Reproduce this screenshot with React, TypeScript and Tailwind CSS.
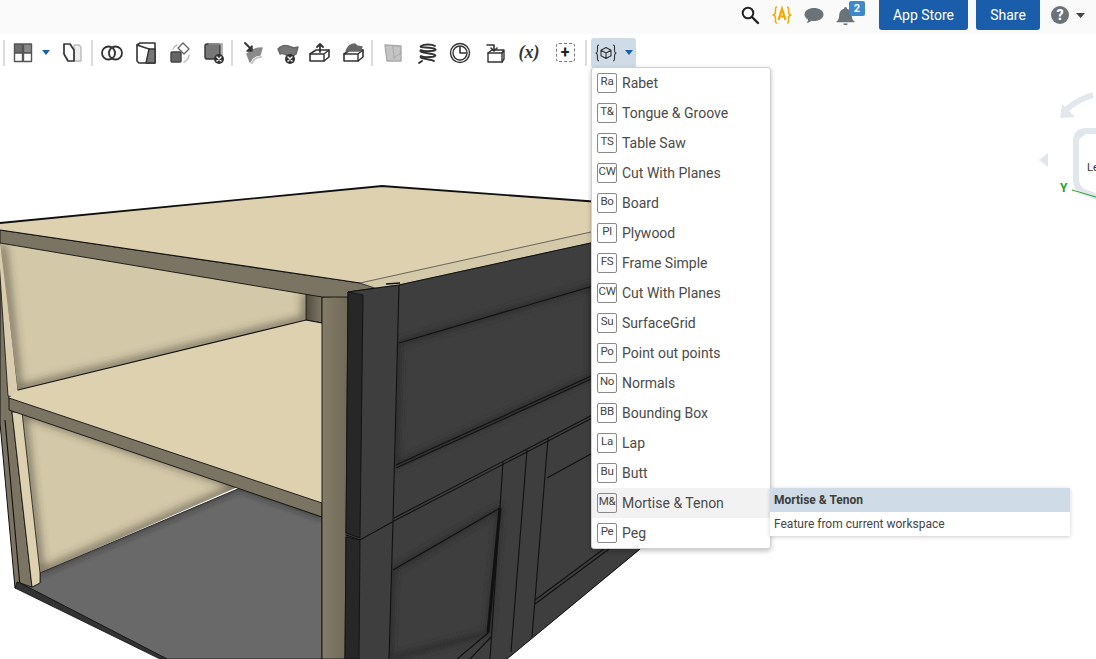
import React from "react";

const items: [string, string][] = [
  ["Ra", "Rabet"], ["T&", "Tongue & Groove"], ["TS", "Table Saw"], ["CW", "Cut With Planes"],
  ["Bo", "Board"], ["Pl", "Plywood"], ["FS", "Frame Simple"], ["CW", "Cut With Planes"],
  ["Su", "SurfaceGrid"], ["Po", "Point out points"], ["No", "Normals"], ["BB", "Bounding Box"],
  ["La", "Lap"], ["Bu", "Butt"], ["M&", "Mortise & Tenon"], ["Pe", "Peg"],
];

const I = ({ children }: { children: React.ReactNode }) => (
  <svg width="24" height="24" viewBox="0 0 24 24" fill="none" stroke="#333" strokeWidth="1.4" strokeLinejoin="round" strokeLinecap="round">{children}</svg>
);
const X = ({ cx = 17, cy = 18 }: { cx?: number; cy?: number }) => (
  <g><circle cx={cx} cy={cy} r="5" fill="#333" stroke="none" /><path d={`M${cx - 2} ${cy - 2}l4 4M${cx + 2} ${cy - 2}l-4 4`} stroke="#fff" /></g>
);
const Sep = ({ w }: { w: string }) => <div className={`${w} h-[26px] flex justify-center shrink-0`}><div className="w-[2px] shrink-0 h-full bg-[#dcdcdc]" /></div>;
const Caret = () => <svg width="8" height="5" viewBox="0 0 8 5"><path d="M0 0h8L4 5z" fill="#1a5dab" /></svg>;

const icons: Record<string, React.ReactNode> = {
  grid: <I><rect x="3.500" y="3" width="8" height="9" fill="#6e6e6e" stroke="#555" /><rect x="12.500" y="3" width="8" height="9" fill="#8a8a8a" stroke="#555" /><rect x="3.500" y="12" width="8" height="8.500" fill="#fff" stroke="#555" /><rect x="12.500" y="12" width="8" height="8.500" fill="#fff" stroke="#555" /></I>,
  pages: <I><path d="M14 4h5l2 2v14h-7z" fill="#eee" stroke="#bbb" /><path d="M4 3h6l4 6v11H8L4 13z" fill="#fff" stroke="#333" strokeWidth="1.700" /></I>,
  bool: <I><circle cx="8.500" cy="12" r="6.500" strokeWidth="1.800" /><circle cx="15.500" cy="12" r="6.500" strokeWidth="1.800" /><path d="M12 6.600a6.500 6.500 0 0 1 0 10.800a6.500 6.500 0 0 1 0-10.800z" fill="#fff" /></I>,
  box: <I><path d="M3 4l3-2h15v20H5l-2-2z" fill="#fff" strokeWidth="1.600" /><path d="M15 8h6v14h-9z" fill="#777" stroke="#333" /><path d="M3 4l12 4" /></I>,
  xform: <I><path d="M15 2l6 6-5 5-6-6z" fill="#fff" stroke="#666" /><rect x="3" y="11" width="10" height="10" rx="1" fill="#666" stroke="#444" /><path d="M5 8a8 8 0 0 1 4-4M21 14a8 8 0 0 1-5 7" stroke="#bbb" /></I>,
  del: <I><rect x="3" y="3" width="15" height="15" rx="2" fill="#777" stroke="#333" /><path d="M7 3h13v11" stroke="#999" /><X /></I>,
  surf: <I><path d="M6 13c5-5 9-6 15-6l-2 7c-4 0-7 1-10 7z" fill="#8a8a8a" stroke="#8a8a8a" /><path d="M11 22c2-4 5-6 9-6" stroke="#c4c4c4" strokeWidth="2" /><path d="M4 2l6 6" strokeWidth="2" /><path d="M6 10l5 0 0-5z" fill="#333" /></I>,
  sdel: <I><path d="M2 8c5-5 9-4 13-2 2 1 4 1 7 0l-2 7-6 4C11 13 6 12 4 13z" fill="#777" stroke="#666" /><X cx={14} cy={18} /></I>,
  thick: <I><path d="M2 13l6-4h13v7l-5 4H2z" fill="#fff" strokeWidth="1.600" /><path d="M2 13h14v7M16 13l5-4" /><path d="M12 11V3M9 6l3-3 3 3" strokeWidth="1.800" /></I>,
  extr: <I><path d="M2 13l6-4h13v7l-5 4H2z" fill="#fff" strokeWidth="1.600" /><path d="M2 13h14v7M16 13l5-4" /><path d="M4 10c2-5 6-7 9-7l2 2 5 1-2 4H6z" fill="#666" stroke="#666" /></I>,
  plane: <I><path d="M4 4l16 1v15H6z" fill="#c4c4c4" stroke="#aaa" /><path d="M13 17l7-5M13 17l-1-12" stroke="#a8a8a8" strokeWidth="1" /></I>,
  helix: <I><path d="M20 5c-3-2-11-2-14 0s10 1 14 3-11 3-14 1c-4 3 11 3 14 5s-11 3-14 1c-3 3 10 3 13 5M4 22l3-2" strokeWidth="1.900" /></I>,
  clock: <I><circle cx="12" cy="12" r="9.500" /><circle cx="12" cy="12" r="7" /><path d="M12 6v6h6" strokeWidth="1.600" /></I>,
  ins: <I><path d="M4 12h14v9H4z" fill="#fff" /><path d="M4 12l4-3h12v9l-2 3M18 12l2-3" /><path d="M3 4h7v6M7 7l3 3 3-3" strokeWidth="1.600" /></I>,
};

const Slot = ({ w, k }: { w: string; k: string }) => <div className={`${w} h-[26px] flex items-center justify-center shrink-0`}>{icons[k]}</div>;

function Cad() {
  const ink = { stroke: "#111", strokeWidth: 1.1, fill: "none" };
  const wall1 = "0,243 306,293 306,320 18,390";
  const wall2 = "22,412 240,486 40,573";
  const shelf = "18,390 306,320 322,323 322,503 9,398";
  const floor = "40,573 240,488 322,517 322,659 167,659 20,583 32,587 40,583";
  return (
    <svg className="absolute inset-0 w-full h-full" viewBox="0 68 1096 591">
      <defs>
        <filter id="b" x="-20%" y="-20%" width="140%" height="140%"><feGaussianBlur stdDeviation="5" /></filter>
        <filter id="s" x="-20%" y="-20%" width="140%" height="140%"><feGaussianBlur stdDeviation="3" /></filter>
        <clipPath id="c1"><polygon points={wall1} /></clipPath>
        <clipPath id="c2"><polygon points={wall2} /></clipPath>
        <clipPath id="c3"><polygon points={floor} /></clipPath>
        <clipPath id="c4"><polygon points="399,285 591,243 640,243 640,549 507,659 389,659 393,522 394,518" /></clipPath>
        <linearGradient id="post" x1="0" x2="1" y1="0" y2="0"><stop offset="0" stopColor="#837c68" /><stop offset="1" stopColor="#6f6957" /></linearGradient>
        <linearGradient id="post2" x1="0" x2="1" y1="0" y2="0"><stop offset="0" stopColor="#4f4b3e" /><stop offset="1" stopColor="#807965" /></linearGradient>
      </defs>

      <polygon points="0,243 9,398 12,412 32,587 15,588 0,423" fill="#7b7462" stroke="#111" strokeWidth="1" />
      <path d="M5 420 L20 586" {...ink} />
      <polygon points="-2,245 2,245 18,390 15,397 8,396" fill="#d9cdae" stroke="#111" strokeWidth="0.800" />
      <polygon points={wall1} fill="#d3c8a8" />
      <g clipPath="url(#c1)"><path d="M2 245 L18 390 L306 320 L306 293" fill="none" stroke="#3d3a2e" strokeOpacity="0.8" strokeWidth="6" filter="url(#b)" /></g>
      <polygon points={wall2} fill="#d3c8a8" />
      <g clipPath="url(#c2)"><polygon points={wall2} fill="none" stroke="#3d3a2e" strokeOpacity="0.8" strokeWidth="6" filter="url(#b)" /></g>
      <polygon points={floor} fill="#696969" stroke="#111" strokeWidth="0.800" />
      <g clipPath="url(#c3)"><path d="M40 573 L240 488 L322 517" fill="none" stroke="#222" strokeOpacity="0.7" strokeWidth="4" filter="url(#s)" /></g>
      <polygon points="12,412 22,412 40,573 40,583 32,587" fill="#ddd1b0" stroke="#111" strokeWidth="0.800" />
      <polygon points="15,588 17,582 20,583 167,659 160,659" fill="#333" stroke="#111" strokeWidth="0.800" />
      <polygon points="306,293 322,296 322,323 306,320" fill="url(#post2)" stroke="#111" strokeWidth="0.800" />
      <polygon points={shelf} fill="#ddd1b0" />
      <path d="M18 390 L306 320 L322 323" {...ink} />
      <polygon points="9,398 322,503 322,517 9,410" fill="#7b7462" stroke="#111" strokeWidth="0.900" />
      <polygon points="322,297 348,296 345,659 322,659" fill="url(#post)" stroke="#111" strokeWidth="0.900" />

      <polygon points="0,243 0,230 340,280 360,283 375,288 348,292 348,297 322,297" fill="#7b7462" stroke="#111" strokeWidth="0.900" />
      <polygon points="0,223 382,186 600,202 600,230 360,283 0,230" fill="#ddd1b0" />
      <path d="M0 223 L382 186 L600 202" fill="none" stroke="#111" strokeWidth="1.800" />
      <path d="M0 230 L340 280 L360 283" {...ink} />
      <polygon points="360,283 600,230 600,241 399,285 375,288" fill="#d4c9a9" stroke="#333" strokeWidth="0.700" />

      <polygon points="399,285 600,241 660,241 660,533 507,659 345,659 348,292" fill="#3e3e3e" />
      <g clipPath="url(#c4)">
        <polygon points="399,343 592,286 592,376 396,465" fill="none" stroke="#2c2c2c" strokeWidth="5" filter="url(#s)" />
        <polygon points="393,570 500,508 488,633 389,659" fill="none" stroke="#2c2c2c" strokeWidth="5" filter="url(#s)" />
      </g>
      <polygon points="348,292 363,295 360,538 346,533" fill="#272727" stroke="#111" strokeWidth="0.900" />
      <polygon points="346,537 360,540 359,659 345,659" fill="#272727" stroke="#111" strokeWidth="0.900" />
      <path d="M348 292 L399 285 L600 241" fill="none" stroke="#111" strokeWidth="1.100" />
      <path d="M386 284 L400 283" fill="none" stroke="#111" strokeWidth="1.400" />
      <path d="M399 285 L393 522 L389 659 M399 343 L600 284 M396 465 L600 372 M396 468 L600 375 M394 518 L600 411 M394 521 L600 414 M346 535 L360 540 L394 521" {...ink} />
      <path d="M393 570 L500 508 M503 462 L490 659 M527 450 L511 652 M548 438 L532 637 M547 478 L600 449 M535 600 L640 522 M535 604 L640 526 M488 633 L457 659 M492 636 L470 659" {...ink} />
      <path d="M500 508 L488 633" fill="none" stroke="#111" strokeWidth="3" />
      <path d="M507 659 L640 549" fill="none" stroke="#111" strokeWidth="1" />

      <path d="M1093 95 C1080 99 1072 104 1066 110" fill="none" stroke="#e1e7ed" strokeWidth="6" />
      <polygon points="1060,118 1062,104 1075,117" fill="#e1e7ed" />
      <polygon points="1039,160 1048,153 1048,167" fill="#dfe5eb" />
      <path d="M1100 131 L1085 131 Q1076 132 1076 142 L1076 180 Q1076 188 1084 192 L1100 198" fill="#fff" stroke="#e1e7ed" strokeWidth="6" />
      <path d="M1075 140 L1084 133" stroke="#e1e7ed" strokeWidth="4" />
      <text x="1087" y="171" fontFamily="Roboto, sans-serif" fontSize="11" fill="#333">Le</text>
      <text x="1060" y="192" fontFamily="Roboto, sans-serif" fontSize="12" fontWeight="700" fill="#21a62b">Y</text>
      <path d="M1072 190 L1096 197" stroke="#21a62b" strokeWidth="1" />
    </svg>
  );
}

export default function App() {
  return (
    <div className="relative w-[1096px] h-[659px] overflow-hidden bg-white font-[Roboto,sans-serif] text-[#444] flex flex-col">
      <div className="h-[34px] shrink-0 bg-[#fafafa] flex justify-end items-start">
        <div className="flex items-center h-[30px]">
          <svg width="20" height="20" viewBox="0 0 20 20" fill="none" stroke="#222" strokeWidth="2" className="mr-[12px]"><circle cx="8" cy="8" r="5.300" /><path d="M12 12l6 6" strokeLinecap="round" strokeWidth="2.400" /></svg>
          <svg width="20" height="20" viewBox="0 0 20 20" fill="none" stroke="#f5a800" strokeWidth="1.500" className="mr-[12px]"><path d="M5 2C3 2 3.500 4 3.500 6.500S3 9.500 1.500 10C3 10.500 3.500 11 3.500 13.500S3 18 5 18M15 2c2 0 1.500 2 1.500 4.500s.5 3 2 3.500c-1.500.5-2 1-2 3.500s.5 4.500-1.500 4.500" /><path d="M6.500 15L10 4l3.500 11M8 11.500h4" strokeWidth="2.200" /></svg>
          <svg width="20" height="18" viewBox="0 0 20 18" className="mr-[12px]"><path d="M10 2c5 0 9.500 2.500 9.500 6.500S15 15 10 15c-1 0-2 0-3-.3C6 16 4 17 2.500 17c1-1 1.500-2.300 1.500-3.500C1.800 12.300.5 10.500.5 8.500.5 4.500 5 2 10 2z" fill="#6c7378" /></svg>
          <div className="relative w-[22px] h-[30px] mr-[21px] flex items-center">
            <svg width="19" height="19" viewBox="0 0 18 18"><path d="M9 1a1.500 1.500 0 0 1 1.500 1.500C13.500 3.200 15 6 15 9c0 3 .8 4.500 2.500 5.500v1h-17v-1C2.200 13.500 3 12 3 9c0-3 1.500-5.800 4.500-6.500A1.500 1.500 0 0 1 9 1zM7 16.500h4a2 2 0 0 1-4 0z" fill="#6c7378" /></svg>
            <div className="absolute left-[13px] top-[1px] w-[16px] h-[15px] bg-[#3f88c9] rounded-[2px] text-white text-[11px] font-bold flex items-center justify-center leading-none">2</div>
          </div>
        </div>
        <div className="w-[89px] h-[30px] bg-[#1a5dab] rounded-b-[3px] text-white text-[14px] flex items-center justify-center">App Store</div>
        <div className="w-[64px] h-[30px] ml-[8px] bg-[#1a5dab] rounded-b-[3px] text-white text-[14px] flex items-center justify-center">Share</div>
        <div className="w-[56px] h-[30px] flex items-center pl-[11px]">
          <div className="w-[18px] h-[18px] rounded-full bg-[#6c7378] text-white text-[14px] font-black flex items-center justify-center leading-none">?</div>
          <svg width="9" height="5" viewBox="0 0 9 5" className="ml-[7px]"><path d="M0 0h9L4.500 5z" fill="#444" /></svg>
        </div>
      </div>

      <div className="h-[34px] shrink-0 bg-white flex items-center pt-[3px]">
        <Sep w="w-[8px]" />
        <Slot w="w-[30px]" k="grid" />
        <div className="w-[16px] flex justify-center shrink-0"><Caret /></div>
        <Slot w="w-[35px]" k="pages" />
        <Sep w="w-[6px]" />
        <Slot w="w-[34px]" k="bool" />
        <Slot w="w-[34px]" k="box" />
        <Slot w="w-[34px]" k="xform" />
        <Slot w="w-[34px]" k="del" />
        <Sep w="w-[2px]" />
        <Slot w="w-[40px]" k="surf" />
        <Slot w="w-[30px]" k="sdel" />
        <Slot w="w-[34px]" k="thick" />
        <Slot w="w-[34px]" k="extr" />
        <Sep w="w-[2px]" />
        <Slot w="w-[40px]" k="plane" />
        <Slot w="w-[28px]" k="helix" />
        <Slot w="w-[38px]" k="clock" />
        <Slot w="w-[34px]" k="ins" />
        <div className="w-[32px] h-[26px] shrink-0 flex items-center justify-center font-[Liberation_Serif,serif] italic font-bold text-[18px] text-[#333]">(x)</div>
        <div className="w-[40px] h-[26px] shrink-0 flex items-center justify-center">
          <div className="w-[19px] h-[19px] rounded-[3px] border border-dashed border-[#777] flex items-center justify-center text-[16px] font-bold leading-none text-[#222]">+</div>
        </div>
        <Sep w="w-[2px]" />
        <div className="ml-[4px] w-[45px] h-[30px] bg-[#cfdbe6] rounded-[3px] shrink-0 flex items-center pl-[4px] gap-[8px]">
          <svg width="22" height="22" viewBox="0 0 22 22" fill="none" stroke="#333" strokeWidth="1.100" strokeLinejoin="round"><path d="M11 5.500l5 2.800v5.400l-5 2.800-5-2.800V8.300zM6 8.300l5 2.700 5-2.700M11 11v5.500" /><path d="M4 3C2 3 2.500 5 2.500 8S2.300 10.300 1 11c1.300.7 1.500 1 1.500 3S2 19 4 19M18 3c2 0 1.500 2 1.500 5s.2 2.300 1.500 3c-1.300.7-1.500 1-1.500 3s.5 5-1.500 5" /></svg>
          <Caret />
        </div>
      </div>

      <div className="relative flex-1">
        <Cad />
        <div className="absolute left-[591px] top-0 w-[180px] bg-white rounded-[3px] border border-[#d0d0d0] shadow-[0_2px_5px_rgba(0,0,0,0.25)] z-10 -mt-[1px]">
          {items.map(([b, l], i) => {
            const active = l === "Mortise & Tenon";
            return (
              <div key={i} className={`h-[30px] flex items-center pl-[5px] ${active ? "bg-[#f2f2f2]" : ""}`}>
                <div className="w-[20px] h-[20px] shrink-0 border border-[#8a8a8a] rounded-[2px] text-[11.500px] leading-[15px] text-center text-[#444] tracking-tight">{b}</div>
                <div className="ml-[5px] text-[14px] text-[#4a4a4a] whitespace-nowrap">{l}</div>
              </div>
            );
          })}
        </div>
        <div className="absolute left-[770px] top-[420px] w-[300px] shadow-[0_1px_4px_rgba(0,0,0,0.2)] z-10 bg-white text-[12px]">
          <div className="h-[24px] bg-[#cfdbe6] flex items-center pl-[4px] font-bold text-[#3d3d3d]">Mortise &amp; Tenon</div>
          <div className="h-[24px] flex items-center pl-[4px] text-[#444]">Feature from current workspace</div>
        </div>
      </div>
    </div>
  );
}
